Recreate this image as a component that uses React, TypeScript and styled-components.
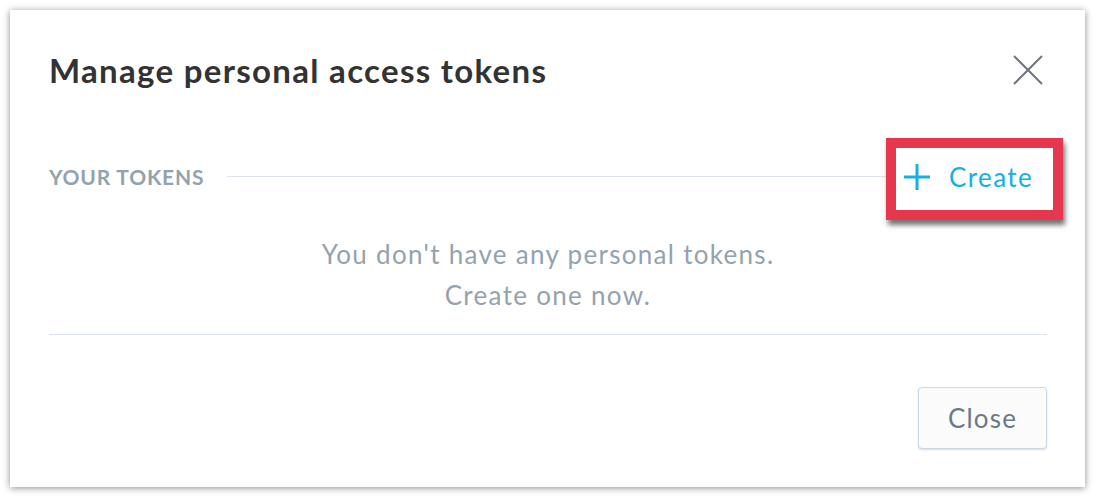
import styled, { createGlobalStyle } from 'styled-components'

const GlobalStyle = createGlobalStyle`
  html, body {
    margin: 0;
    padding: 0;
    background: #ffffff;
  }

  body {
    font-family: Lato, 'Open Sans', 'Liberation Sans', sans-serif;
  }
`

const Page = styled.div`
  padding: 10px 11px 10px 10px;
`

const Dialog = styled.div`
  display: flex;
  flex-direction: column;
  height: 477px;
  box-sizing: border-box;
  padding: 40px 38px 38px 39px;
  background: #fff;
  box-shadow: 0 1px 7px rgba(0, 0, 0, 0.45);
`

const Header = styled.div`
  display: flex;
  align-items: center;
  justify-content: space-between;
  height: 40px;
`

const Title = styled.h1`
  margin: 0;
  color: #333333;
  font-size: 33px;
  font-weight: 700;
  line-height: 40px;
  letter-spacing: 1.3px;
`

const CloseIcon = styled.button`
  display: flex;
  margin-right: 4px;
  padding: 0;
  border: 0;
  background: none;
  cursor: pointer;
`

const SectionRow = styled.div`
  display: flex;
  align-items: center;
  margin-top: 48px;
  height: 82px;
`

const SectionLabel = styled.span`
  margin-bottom: 5px;
  color: #94a2ae;
  font-size: 21px;
  font-weight: 700;
  text-transform: uppercase;
  letter-spacing: 0.8px;
`

const Rule = styled.div`
  flex: 1;
  height: 1px;
  margin: 0 0 5px 23px;
  background: #dde3ec;
`

const CreateButton = styled.button`
  display: flex;
  align-items: center;
  gap: 18px;
  box-sizing: border-box;
  height: 82px;
  width: 177px;
  margin-right: -16px;
  padding: 0 0 4px 7px;
  border: 10px solid #e6374f;
  background: #fff;
  box-shadow: 2px 5px 5px rgba(0, 0, 0, 0.55);
  color: #14b0e3;
  font-family: inherit;
  font-size: 26px;
  letter-spacing: 1.4px;
  cursor: pointer;
`

const Message = styled.p`
  margin: 14px 0 18px;
  color: #94a2ae;
  font-size: 26px;
  line-height: 41px;
  letter-spacing: 1.3px;
  text-align: center;
`

const Divider = styled.hr`
  margin: 0;
  border: 0;
  height: 1px;
  background: #dde3ec;
`

const Footer = styled.div`
  display: flex;
  justify-content: flex-end;
  margin-top: auto;
`

const FooterButton = styled.button`
  width: 129px;
  height: 62px;
  border: 1px solid #ccd9e4;
  border-radius: 4px;
  background: #fbfbfb;
  box-shadow: 0 1px 2px rgba(180, 195, 210, 0.6);
  color: #6b7886;
  font-family: inherit;
  font-size: 26px;
  letter-spacing: 1.2px;
  cursor: pointer;
`

const App = () => {
  return (
    <Page>
      <GlobalStyle />
      <Dialog>
        <Header>
          <Title>Manage personal access tokens</Title>
          <CloseIcon aria-label="Close">
            <svg width="30" height="30" viewBox="0 0 30 30">
              <path d="M1 1 L29 29 M29 1 L1 29" stroke="#6d7580" strokeWidth="2" fill="none" />
            </svg>
          </CloseIcon>
        </Header>
        <SectionRow>
          <SectionLabel>Your tokens</SectionLabel>
          <Rule />
          <CreateButton>
            <svg width="28" height="28" viewBox="0 0 28 28">
              <path d="M14 1 V27 M1 14 H27" stroke="#14b0e3" strokeWidth="3" fill="none" />
            </svg>
            Create
          </CreateButton>
        </SectionRow>
        <Message>
          You don't have any personal tokens.
          <br />
          Create one now.
        </Message>
        <Divider />
        <Footer>
          <FooterButton>Close</FooterButton>
        </Footer>
      </Dialog>
    </Page>
  )
}

export default App
